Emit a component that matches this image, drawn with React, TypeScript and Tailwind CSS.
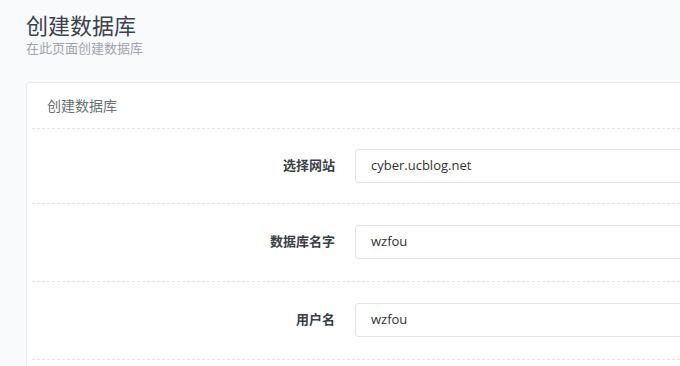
const font = { fontFamily: '"Open Sans", "Noto Sans CJK SC", sans-serif' }

const rows = [
  { label: '选择网站', value: 'cyber.ucblog.net', pad: 'pt-[20px] pb-[20px]' },
  { label: '数据库名字', value: 'wzfou', pad: 'pt-[21px] pb-[22px]' },
  { label: '用户名', value: 'wzfou', pad: 'pt-[21px] pb-[22px]' },
]

export default function App() {
  return (
    <div className="h-[366px] w-[680px] overflow-hidden bg-[#f9fafc] pl-[26px] pt-[10px]" style={font}>
      <h1 className="text-[22px] leading-[30px] text-[#3b424c]">创建数据库</h1>
      <p className="text-[13px] leading-[16px] text-[#a0a4aa]">在此页面创建数据库</p>

      <div className="mt-[26px] w-[720px] rounded-tl-[4px] border border-[#e2e8ef] bg-white">
        <div className="flex h-[45px] items-center pl-[20px] text-[14px] text-[#6b6f75]">创建数据库</div>
        <div className="mx-[5px] border-t border-dashed border-[#dfe5ec]">
          {rows.map(r => (
            <div key={r.label} className={`flex items-center gap-[20px] border-b border-dashed border-[#dfe5ec] ${r.pad}`}>
              <label className="w-[303px] text-right text-[13px] font-bold text-[#3a3f46]">{r.label}</label>
              <div className="flex h-[34px] flex-1 items-center rounded-[3px] border border-[#dde4ec] px-[15px] text-[13px] text-[#333]">
                {r.value}
              </div>
            </div>
          ))}
          {/* rest of the form continues below the fold */}
          <div className="h-[60px]" />
        </div>
      </div>
    </div>
  )
}
